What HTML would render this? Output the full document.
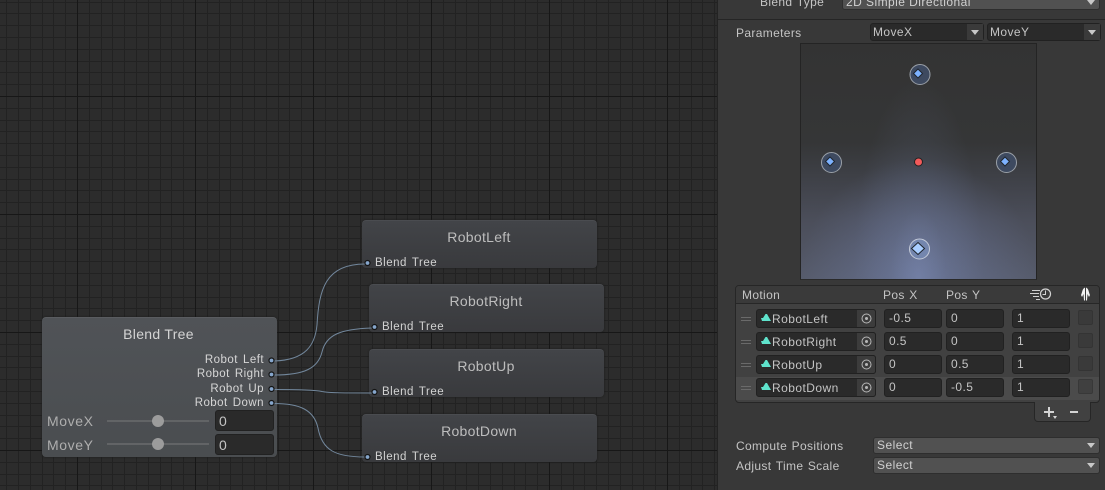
<!DOCTYPE html>
<html><head><meta charset="utf-8">
<style>
html,body{margin:0;padding:0;width:1105px;height:490px;overflow:hidden;background:#2a2a2a}
body{position:relative;font-family:"Liberation Sans",sans-serif;font-size:12px;color:#c4c4c4}
div,span{position:absolute;box-sizing:border-box}
.t{white-space:nowrap;line-height:14px;letter-spacing:.35px;word-spacing:.8px}
.node{border-radius:4px;background:linear-gradient(#424448,#393a3d);box-shadow:0 0 2px #1c1c1c;border-top:1px solid #4a4c50}
.title{font-size:14px;line-height:16px;text-align:center;color:#bdbdbd;left:-1px;right:0;letter-spacing:.3px;white-space:nowrap}
.bt{left:13px;color:#d2d2d2;font-size:11.5px;letter-spacing:.5px;word-spacing:1.5px}
.rl{right:841px;color:#d6d6d6;font-size:11.5px;letter-spacing:.45px;word-spacing:1.5px}
.f{background:#2a2a2a;border:1px solid #212121;border-radius:3px;height:19px;color:#c4c4c4;line-height:17px;padding-left:4px;white-space:nowrap;letter-spacing:.4px}
.dd{background:#515151;border:1px solid #2e2e2e;border-radius:3px;line-height:14px;color:#d0d0d0;padding-left:3px;letter-spacing:.45px}
.arr{width:0;height:0;border-left:4px solid transparent;border-right:4px solid transparent;border-top:5px solid #c8c8c8}
.cb{left:1078px;width:15px;height:15px;background:#3a3a3a;border:1px solid #343434;border-radius:2px}
.h{left:741px;width:10px;height:1px;background:#6a6a6a}
.m{left:756px;width:120px;height:19px;background:#2a2a2a;border:1px solid #212121;border-radius:3px}
.pick{left:857px;width:19px;height:19px;background:#3c3c3c;border-radius:0 3px 3px 0;border:1px solid #212121;border-left:none}
.lbl{color:#c4c4c4}
</style></head><body>

<svg style="position:absolute;left:0;top:0" width="717" height="490" shape-rendering="crispEdges">
<defs><pattern id="g" x="77" y="96" width="118" height="118" patternUnits="userSpaceOnUse">
<rect width="118" height="118" fill="#2c2c2c"/>
<g fill="#222222">
<rect x="12" width="1" height="118"/><rect x="24" width="1" height="118"/><rect x="35" width="1" height="118"/><rect x="47" width="1" height="118"/><rect x="59" width="1" height="118"/><rect x="71" width="1" height="118"/><rect x="83" width="1" height="118"/><rect x="94" width="1" height="118"/><rect x="106" width="1" height="118"/>
<rect y="12" width="118" height="1"/><rect y="24" width="118" height="1"/><rect y="35" width="118" height="1"/><rect y="47" width="118" height="1"/><rect y="59" width="118" height="1"/><rect y="71" width="118" height="1"/><rect y="83" width="118" height="1"/><rect y="94" width="118" height="1"/><rect y="106" width="118" height="1"/>
</g>
<rect x="0" width="1" height="118" fill="#171717"/><rect y="0" width="118" height="1" fill="#171717"/>
</pattern></defs>
<rect width="717" height="490" fill="url(#g)"/>
</svg>

<!-- Blend Tree node -->
<div class="node" style="left:42px;top:317px;width:235px;height:140px;background:linear-gradient(#505357,#4a4d50);border-top:1px solid #5a5c60"></div>
<div class="title" style="left:42px;right:auto;width:233px;top:326px;color:#d4d4d4">Blend Tree</div>
<span class="t rl" style="top:353px">Robot Left</span>
<span class="t rl" style="top:367px">Robot Right</span>
<span class="t rl" style="top:382px">Robot Up</span>
<span class="t rl" style="top:396px">Robot Down</span>
<span class="t" style="left:47px;top:414px;font-size:14px;color:#aeaeae;letter-spacing:.6px">MoveX</span>
<span class="t" style="left:47px;top:438px;font-size:14px;color:#aeaeae;letter-spacing:.6px">MoveY</span>
<div style="left:107px;top:420px;width:102px;height:2px;background:#626466"></div>
<div style="left:107px;top:443px;width:102px;height:2px;background:#626466"></div>
<div style="left:152px;top:415px;width:12px;height:12px;border-radius:50%;background:#9c9c9c"></div>
<div style="left:152px;top:438px;width:12px;height:12px;border-radius:50%;background:#9c9c9c"></div>
<div class="f" style="left:215px;top:410px;width:59px;height:21px;line-height:20px;font-size:14px;padding-left:3px;background:#2a2a2a">0</div>
<div class="f" style="left:215px;top:434px;width:59px;height:21px;line-height:20px;font-size:14px;padding-left:3px;background:#2a2a2a">0</div>

<!-- Child nodes -->
<div class="node" style="left:362px;top:220px;width:235px;height:48px"><div class="title" style="top:8px">RobotLeft</div><span class="t bt" style="top:35px">Blend Tree</span></div>
<div class="node" style="left:369px;top:284px;width:235px;height:48px"><div class="title" style="top:8px">RobotRight</div><span class="t bt" style="top:35px">Blend Tree</span></div>
<div class="node" style="left:369px;top:349px;width:235px;height:48px"><div class="title" style="top:8px">RobotUp</div><span class="t bt" style="top:35px">Blend Tree</span></div>
<div class="node" style="left:362px;top:414px;width:235px;height:48px"><div class="title" style="top:8px">RobotDown</div><span class="t bt" style="top:35px">Blend Tree</span></div>

<!-- Connections -->
<svg style="position:absolute;left:0;top:0" width="717" height="490" fill="none">
<g stroke="#72879c" stroke-width="1">
<path d="M274 361 C 306 360, 315 345, 317 325 C 319 290, 325 264, 365 264"/>
<path d="M274 375 C 305 375, 318 368, 322 352 C 326 335, 340 329, 372 328"/>
<path d="M274 389.500 C 300 389.500, 315 390, 322 391.500 C 330 393, 345 393, 372 393"/>
<path d="M274 403.500 C 300 403.500, 314 410, 318 428 C 322 450, 335 457, 365 457"/>
</g>
<g fill="#86a6cc" stroke="#141414" stroke-width="1.200">
<circle cx="271.500" cy="360.500" r="2.500"/><circle cx="271.500" cy="374.500" r="2.500"/><circle cx="271.500" cy="389" r="2.500"/><circle cx="271.500" cy="403" r="2.500"/>
<circle cx="367.500" cy="263" r="2.500"/><circle cx="374.500" cy="327" r="2.500"/><circle cx="374.500" cy="392" r="2.500"/><circle cx="367.500" cy="457" r="2.500"/>
</g>
</svg>

<!-- Inspector -->
<div style="left:717px;top:0;width:388px;height:490px;background:#383838;border-left:1px solid #232323"></div>
<span class="t lbl" style="left:760px;top:-5px">Blend Type</span>
<div class="dd" style="left:842px;top:-6px;width:258px;height:16px">2D Simple Directional</div>
<div class="arr" style="left:1087px;top:0"></div>
<div style="left:718px;top:19px;width:387px;height:1px;background:#252525"></div>

<span class="t lbl" style="left:736px;top:26px">Parameters</span>
<div class="f" style="left:870px;top:23px;width:114px;height:18px;line-height:16px;padding-left:2px">MoveX</div>
<div style="left:967px;top:24px;width:16px;height:16px;background:#3a3a3a"></div>
<div class="arr" style="left:971px;top:30px"></div>
<div class="f" style="left:987px;top:23px;width:114px;height:18px;line-height:16px;padding-left:2px">MoveY</div>
<div style="left:1084px;top:24px;width:16px;height:16px;background:#3a3a3a"></div>
<div class="arr" style="left:1088px;top:30px"></div>

<!-- Blend graph -->
<div style="left:800px;top:43px;width:237px;height:237px;border:1px solid #242424;border-bottom-color:#2a2a2a;background:
radial-gradient(ellipse 28px 70px at 50% 100%,rgba(130,145,190,.28),rgba(130,145,190,0)),
radial-gradient(ellipse 65px 200px at 50% 100%,rgba(120,135,175,.30),rgba(120,135,175,0)),
radial-gradient(ellipse 120px 120px at 50% 100%,rgba(115,130,175,.55),rgba(115,130,175,0)),
linear-gradient(to top,#565b6b 0,#4b4e5a 25%,#3d3f45 45%,#353637 58%,#333333 100%)"></div>
<svg style="position:absolute;left:801px;top:43px" width="235" height="236">
<g fill="#3e4a60" stroke="#9aa0a8" stroke-width="1"><circle cx="119" cy="31.500" r="10"/><circle cx="30.500" cy="119.500" r="10"/><circle cx="205.500" cy="119.500" r="10"/><circle cx="118.500" cy="206" r="10" fill="#7486ae" stroke="#c4cad8"/></g>
<g fill="#7db2ff" stroke="#20262e" stroke-width="1"><path d="M117 26 L121.500 30.500 L117 35 L112.500 30.500Z"/><path d="M29 114 L33.500 118.500 L29 123 L24.500 118.500Z"/><path d="M204 114 L208.500 118.500 L204 123 L199.500 118.500Z"/></g>
<path d="M117 199.500 L123.500 205.500 L117 211.500 L110.500 205.500Z" fill="#a9cdff" stroke="#1f242c"/>
<circle cx="117.500" cy="119" r="4" fill="#f35a5a" stroke="#222" stroke-width="1"/>
</svg>

<!-- Motion table -->
<div style="left:735px;top:285px;width:365px;height:118px;background:#414141;border:1px solid #262626;border-radius:4px;overflow:hidden">
<div style="left:0;top:0;width:363px;height:18px;background:#3a3a3a;border-bottom:1px solid #272727"></div>
<div style="left:0;top:91px;width:363px;height:23px;background:#4b4b4b"></div>
</div>
<span class="t lbl" style="left:742px;top:288px">Motion</span>
<span class="t lbl" style="left:883px;top:288px">Pos X</span>
<span class="t lbl" style="left:946px;top:288px">Pos Y</span>
<svg style="position:absolute;left:1030px;top:287px" width="66" height="15" fill="none" stroke="#d2d2d2">
<path d="M2 3.500H10M0 6.500H9M3 9.500H9M6 12.500H10" stroke-width="1"/>
<circle cx="15.500" cy="7" r="5" stroke-width="1.200"/><path d="M15.500 3.500V7.500H12.500" stroke-width="1"/>
<path d="M55 0.500 C52 2 52.500 5 51 8 L52 10 L53.500 7 L54 13.500 L55 13.500 Z" fill="#f2f2f2" stroke="none"/>
<path d="M56 0.500 C59 2 58.500 5 60 8 L59 10 L57.500 7 L57 13.500 L56 13.500 Z" fill="#f2f2f2" stroke="none"/>
</svg>

<div class="h" style="top:317px"></div><div class="h" style="top:320px"></div>
<div class="h" style="top:340px"></div><div class="h" style="top:343px"></div>
<div class="h" style="top:363px"></div><div class="h" style="top:366px"></div>
<div class="h" style="top:386px"></div><div class="h" style="top:389px"></div>

<div class="m" style="top:309px"></div><div class="pick" style="top:309px"></div>
<div class="m" style="top:332px"></div><div class="pick" style="top:332px"></div>
<div class="m" style="top:355px"></div><div class="pick" style="top:355px"></div>
<div class="m" style="top:378px"></div><div class="pick" style="top:378px"></div>

<span class="t" style="left:772px;top:312px;letter-spacing:.45px">RobotLeft</span>
<span class="t" style="left:772px;top:335px;letter-spacing:.45px">RobotRight</span>
<span class="t" style="left:772px;top:358px;letter-spacing:.45px">RobotUp</span>
<span class="t" style="left:772px;top:381px;letter-spacing:.45px">RobotDown</span>

<svg style="position:absolute;left:756px;top:305px" width="125" height="100">
<g fill="#5fe3cc">
<path d="M5 13L7 13L9.500 9L11 9L15 16H6Z"/>
<path d="M5 36L7 36L9.500 32L11 32L15 39H6Z"/>
<path d="M5 59L7 59L9.500 55L11 55L15 62H6Z"/>
<path d="M5 82L7 82L9.500 78L11 78L15 85H6Z"/>
</g>
<g fill="none" stroke="#b8b8b8" stroke-width="1">
<circle cx="110.500" cy="13.500" r="4.500"/><circle cx="110.500" cy="36.500" r="4.500"/><circle cx="110.500" cy="59.500" r="4.500"/><circle cx="110.500" cy="82.500" r="4.500"/>
</g>
<g fill="#b8b8b8">
<circle cx="110.500" cy="13.500" r="1.500"/><circle cx="110.500" cy="36.500" r="1.500"/><circle cx="110.500" cy="59.500" r="1.500"/><circle cx="110.500" cy="82.500" r="1.500"/>
</g>
</svg>

<div class="f" style="left:884px;top:309px;width:58px">-0.5</div>
<div class="f" style="left:946px;top:309px;width:58px">0</div>
<div class="f" style="left:1012px;top:309px;width:58px">1</div>
<div class="cb" style="top:310px"></div>
<div class="f" style="left:884px;top:332px;width:58px">0.5</div>
<div class="f" style="left:946px;top:332px;width:58px">0</div>
<div class="f" style="left:1012px;top:332px;width:58px">1</div>
<div class="cb" style="top:333px"></div>
<div class="f" style="left:884px;top:355px;width:58px">0</div>
<div class="f" style="left:946px;top:355px;width:58px">0.5</div>
<div class="f" style="left:1012px;top:355px;width:58px">1</div>
<div class="cb" style="top:356px"></div>
<div class="f" style="left:884px;top:378px;width:58px">0</div>
<div class="f" style="left:946px;top:378px;width:58px">-0.5</div>
<div class="f" style="left:1012px;top:378px;width:58px">1</div>
<div class="cb" style="top:379px;background:#404040;border-color:#383838"></div>

<!-- + / - box -->
<div style="left:1034px;top:402px;width:57px;height:20px;background:#414141;border:1px solid #262626;border-top:none;border-radius:0 0 4px 4px"></div>
<div style="left:1044px;top:411px;width:10px;height:2px;background:#d4d4d4"></div>
<div style="left:1048px;top:407px;width:2px;height:10px;background:#d4d4d4"></div>
<div class="arr" style="left:1053px;top:416px;border-left-width:2px;border-right-width:2px;border-top-width:3px;border-top-color:#d4d4d4"></div>
<div style="left:1070px;top:411px;width:8px;height:2px;background:#d4d4d4"></div>

<!-- Bottom dropdowns -->
<span class="t lbl" style="left:736px;top:439px">Compute Positions</span>
<span class="t lbl" style="left:736px;top:459px">Adjust Time Scale</span>
<div class="dd" style="left:873px;top:437px;width:227px;height:17px">Select</div>
<div class="arr" style="left:1087px;top:443px"></div>
<div class="dd" style="left:873px;top:457px;width:227px;height:17px">Select</div>
<div class="arr" style="left:1087px;top:463px"></div>
</body></html>
